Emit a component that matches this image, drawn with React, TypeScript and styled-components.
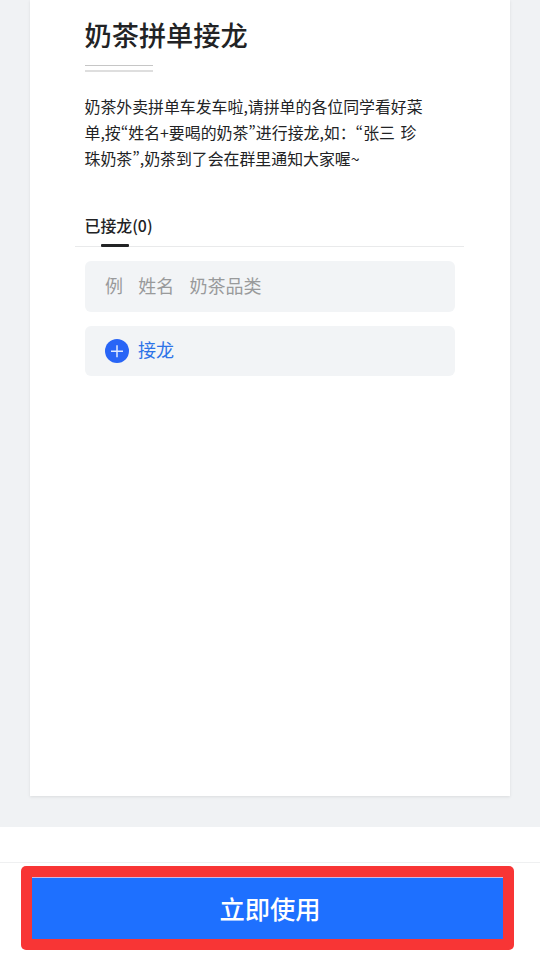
import React from 'react';
import styled, { createGlobalStyle } from 'styled-components';

const GlobalStyle = createGlobalStyle`
  * { box-sizing: border-box; }
  body {
    margin: 0;
    background: #fff;
    font-family: 'Noto Sans CJK SC', sans-serif;
    color: #222325;
  }
`;

const Page = styled.div`
  height: 958px;
  overflow: hidden;
  display: flex;
  flex-direction: column;
`;

const Preview = styled.main`
  height: 827px;
  flex: none;
  padding: 0 30px;
  background: #f0f2f4;
`;

const Sheet = styled.article`
  height: 796px;
  padding: 14px 55px 0;
  background: #fff;
  box-shadow: 0 1px 3px rgba(0, 0, 0, 0.09);
`;

const Title = styled.h1`
  margin: 0 -0.5px;
  font-size: 27.2px;
  line-height: 40px;
  font-weight: 500;
`;

const TitleRule = styled.div`
  width: 68px;
  height: 7px;
  margin: 11px 0 0 -0.5px;
  border-top: 1px solid #c6c6c6;
  border-bottom: 2px solid #dedede;
`;

const Description = styled.p`
  margin: 22px 0 0 -0.5px;
  font-feature-settings: 'pwid';
  font-size: 15.9px;
  line-height: 26px;
  white-space: nowrap;
  word-spacing: 2px;
`;

const TabBar = styled.div`
  display: flex;
  height: 35px;
  margin: 40px -9px 0 -10px;
  padding-left: 9.5px;
  border-bottom: 1px solid #e9eaeb;
`;

const Tab = styled.div`
  display: flex;
  flex-direction: column;
  height: 35px;
  font-size: 15.9px;
  line-height: 28px;
  font-weight: 500;

  &::after {
    content: '';
    width: 28px;
    height: 3px;
    margin: auto 0 0 16px;
    background: #222325;
    border-radius: 1px;
  }
`;

const Entry = styled.div<{ $height: number; $action?: boolean }>`
  display: flex;
  align-items: center;
  height: ${({ $height }) => $height}px;
  margin-top: 14px;
  padding: 0 20px 4px;
  border-radius: 6px;
  background: #f2f4f6;
  color: ${({ $action }) => ($action ? '#2d73e8' : '#999a9b')};
  font-size: 18px;
`;

const Field = styled.span`
  margin-right: 15.3px;
`;

const AddIcon = styled.svg`
  width: 24px;
  height: 24px;
  margin: 4px 9px 0 0;
`;

const Footer = styled.footer`
  flex: 1;
  margin-top: 35px;
  padding: 3px 26px 0 21px;
  border-top: 1px solid #eff0f1;
`;

const Highlight = styled.div`
  height: 84px;
  padding: 11px;
  border-radius: 5px;
  background: #f83535;
`;

const UseButton = styled.button`
  display: block;
  width: 471px;
  height: 62px;
  padding: 0 0 1px 5px;
  border: 0;
  border-top: 1px solid #c7b8e6;
  background: #1e70ff;
  color: #fff;
  font: 500 25.3px/60px 'Noto Sans CJK SC', sans-serif;
`;

export default function App() {
  return (
    <>
      <GlobalStyle />
      <Page>
        <Preview>
          <Sheet>
            <Title>奶茶拼单接龙</Title>
            <TitleRule />
            <Description>
              奶茶外卖拼单车发车啦，请拼单的各位同学看好菜<br />
              单，按“姓名+要喝的奶茶”进行接龙，如：“张三 珍<br />
              珠奶茶”，奶茶到了会在群里通知大家喔~
            </Description>
            <TabBar>
              <Tab>已接龙(0)</Tab>
            </TabBar>
            <Entry $height={51}>
              <Field>例</Field>
              <Field>姓名</Field>
              <Field>奶茶品类</Field>
            </Entry>
            <Entry $height={50} $action>
              <AddIcon viewBox="0 0 24 24" aria-hidden="true">
                <circle cx="12" cy="12" r="12" fill="#2965f6" />
                <path d="M6 12.2h12M12 6.2v12" stroke="#dfe9ff" strokeWidth="1.5" />
              </AddIcon>
              <span>接龙</span>
            </Entry>
          </Sheet>
        </Preview>
        <Footer>
          <Highlight>
            <UseButton type="button">立即使用</UseButton>
          </Highlight>
        </Footer>
      </Page>
    </>
  );
}
